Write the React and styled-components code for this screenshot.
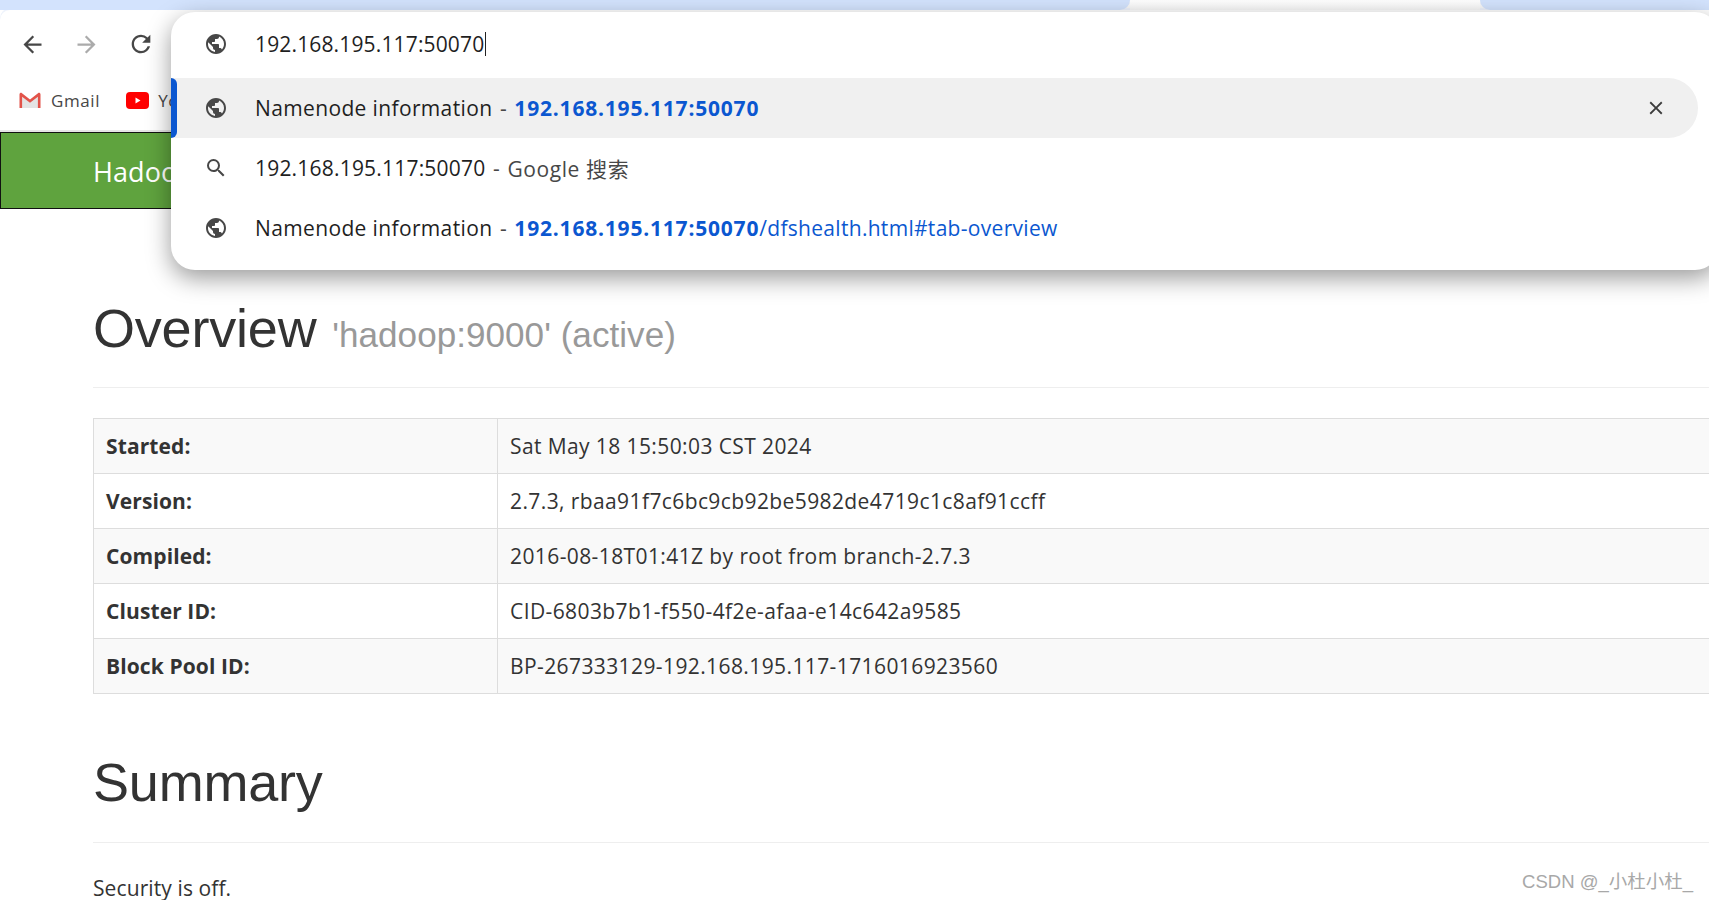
import React from 'react';
import styled, { createGlobalStyle } from 'styled-components';
import { MdArrowBack, MdArrowForward, MdRefresh, MdPublic, MdSearch, MdClose } from 'react-icons/md';

const UI_FONT = `"Open Sans", "Noto Sans CJK SC", sans-serif`;
const HEAD_FONT = `"Liberation Sans", Arial, sans-serif`;

const GlobalStyle = createGlobalStyle`
  html, body {
    margin: 0;
    padding: 0;
    width: 1709px;
    height: 900px;
    overflow: hidden;
    background: #fff;
  }
`;

function GmailIcon() {
  return (
    <svg width="24" height="18" viewBox="0 0 24 18">
      <path d="M3 3l9 7 9-7v14H3z" fill="#e4e4e4" />
      <path d="M1.5 17V3.4C1.5 2 3 1.4 4 2.2L12 8.4l8-6.2c1-.8 2.5-.2 2.5 1.2V17h-2.6V5.8L12 11.8 4.1 5.8V17z" fill="#e2534a" />
    </svg>
  );
}

function YoutubeIcon() {
  return (
    <svg width="23" height="17" viewBox="0 0 23 17">
      <rect width="23" height="17" rx="4" fill="#f00" />
      <path d="M9.5 5.5l5 3-5 3z" fill="#fff" />
    </svg>
  );
}

function App() {
  return (
    <>
      <GlobalStyle />
      <Page>
        <TabStrip>
          <TabGap $width="1130px" />
          <ActiveTab />
          <TabGap $flex />
        </TabStrip>

        <Toolbar>
          <NavRow>
            <NavButton><MdArrowBack size={27} color="#474747" /></NavButton>
            <NavButton><MdArrowForward size={27} color="#ababab" /></NavButton>
            <NavButton><MdRefresh size={28} color="#474747" /></NavButton>
          </NavRow>
          <BookmarkRow>
            <Bookmark><GmailIcon />Gmail</Bookmark>
            <Bookmark><YoutubeIcon />YouTube</Bookmark>
          </BookmarkRow>
        </Toolbar>

        <Navbar>Hadoop</Navbar>

        <Content>
          <PageHeader>
            <Heading>Overview <Small>'hadoop:9000' (active)</Small></Heading>
          </PageHeader>

          <InfoTable>
            <tbody>
              {INFO_ROWS.map(([label, value], i) => (
                <InfoRow key={label} $striped={i % 2 === 0}>
                  <LabelCell>{label}</LabelCell>
                  <ValueCell>{value}</ValueCell>
                </InfoRow>
              ))}
            </tbody>
          </InfoTable>

          <PageHeader $second>
            <Heading>Summary</Heading>
          </PageHeader>

          <Paragraph>Security is off.</Paragraph>
        </Content>

        <Omnibox>
          <InputRow>
            <IconSlot><MdPublic size={24} color="#474747" /></IconSlot>
            <InputText>192.168.195.117:50070</InputText>
            <Caret />
          </InputRow>
          <Suggestion $selected>
            <SelectedMark />
            <IconSlot><MdPublic size={24} color="#474747" /></IconSlot>
            <Title $wide>Namenode information</Title>
            <Dash>-</Dash>
            <Url><b>192.168.195.117:50070</b></Url>
            <CloseButton><MdClose size={22} color="#3c3c3c" /></CloseButton>
          </Suggestion>
          <Suggestion>
            <IconSlot><MdSearch size={24} color="#474747" /></IconSlot>
            <Title>192.168.195.117:50070</Title>
            <Dash>-</Dash>
            <Engine>Google 搜索</Engine>
          </Suggestion>
          <Suggestion>
            <IconSlot><MdPublic size={24} color="#474747" /></IconSlot>
            <Title $wide>Namenode information</Title>
            <Dash>-</Dash>
            <Url><b>192.168.195.117:50070</b>/dfshealth.html#tab-overview</Url>
          </Suggestion>
        </Omnibox>

        <Watermark>CSDN @_小杜小杜_</Watermark>
      </Page>
    </>
  );
}

export default App;

const INFO_ROWS = [
  ['Started:', 'Sat May 18 15:50:03 CST 2024'],
  ['Version:', '2.7.3, rbaa91f7c6bc9cb92be5982de4719c1c8af91ccff'],
  ['Compiled:', '2016-08-18T01:41Z by root from branch-2.7.3'],
  ['Cluster ID:', 'CID-6803b7b1-f550-4f2e-afaa-e14c642a9585'],
  ['Block Pool ID:', 'BP-267333129-192.168.195.117-1716016923560'],
];

const Page = styled.div`
  position: relative;
  width: 1709px;
  height: 900px;
  overflow: hidden;
  font-family: ${UI_FONT};
  background: #fff;
`;

const TabStrip = styled.div`
  display: flex;
  height: 10px;
  background: #f8f8f8;
`;

const TabGap = styled.div`
  background: #d3e3fd;
  width: ${p => p.$width || 'auto'};
  flex: ${p => (p.$flex ? 1 : 'none')};
  border-radius: ${p => (p.$flex ? '0 0 0 12px' : '0 0 12px 0')};
`;

const ActiveTab = styled.div`
  width: 350px;
  background: linear-gradient(#fff, #f8f8f8);
`;

const Toolbar = styled.div`
  background: #fff;
  height: 120px;
  border-radius: 10px 0 0 0;
  box-shadow: 0 -2px 0 #eef3fc;
  border-bottom: 2px solid #e6e6e6;
`;

const NavRow = styled.div`
  display: flex;
  align-items: center;
  height: 68px;
  padding-left: 5.5px;
`;

const NavButton = styled.div`
  width: 54px;
  display: flex;
  justify-content: center;
`;

const BookmarkRow = styled.div`
  display: flex;
  align-items: center;
  height: 44px;
  padding-left: 18px;
  gap: 26px;
`;

const Bookmark = styled.div`
  display: flex;
  align-items: center;
  gap: 9px;
  font-size: 17px;
  color: #474747;
  letter-spacing: 0.6px;
`;

const Navbar = styled.div`
  box-sizing: border-box;
  height: 77px;
  display: flex;
  align-items: center;
  padding: 1px 0 0 92px;
  background: #5fa33e;
  border: 1px solid #111;
  color: #fff;
  font-size: 27px;
  letter-spacing: 0.1px;
`;

const Content = styled.div`
  padding: 90px 0 0 93px;
`;

const PageHeader = styled.div`
  padding-bottom: 29px;
  margin-top: ${p => (p.$second ? '59px' : '0')};
  border-bottom: 1px solid #eee;
  margin-bottom: 30px;
  width: 1700px;
`;

const Heading = styled.h1`
  margin: 0;
  font: 500 54px/1.1 ${HEAD_FONT};
  letter-spacing: -0.2px;
  color: #333;
`;

const Small = styled.small`
  margin-left: 1px;
  font-size: 35.1px;
  font-weight: 400;
  letter-spacing: 0.03px;
  color: #999;
`;

const InfoTable = styled.table`
  border-collapse: collapse;
  width: 1800px;
  table-layout: fixed;
  font-size: 21px;
  color: #333;
  border: 1px solid #ddd;
`;

const InfoRow = styled.tr`
  height: 55px;
  background: ${p => (p.$striped ? '#f9f9f9' : '#fff')};
`;

const LabelCell = styled.td`
  width: 379px;
  padding: 0 12px;
  border: 1px solid #ddd;
  font-weight: 700;
  letter-spacing: 0.1px;
`;

const ValueCell = styled.td`
  padding: 0 12px;
  border: 1px solid #ddd;
  letter-spacing: 0.4px;
`;

const Paragraph = styled.p`
  margin: 0;
  padding-top: 3px;
  font-size: 21px;
  line-height: 24px;
  color: #333;
  letter-spacing: 0.1px;
`;

/* chrome's address dropdown sits over the page */
const Omnibox = styled.div`
  position: absolute;
  left: 171px;
  top: 12px;
  width: 1548px;
  box-sizing: border-box;
  padding-bottom: 12px;
  background: #fff;
  border-radius: 24px;
  box-shadow: 0 8px 24px rgba(0, 0, 0, 0.4);
`;

const InputRow = styled.div`
  display: flex;
  align-items: center;
  height: 64px;
  padding-bottom: 2px;
`;

const IconSlot = styled.div`
  width: 84px;
  box-sizing: border-box;
  flex: none;
  display: flex;
  padding-left: 33px;
`;

const InputText = styled.span`
  font-size: 21px;
  color: #1f1f1f;
  letter-spacing: 0.15px;
`;

const Caret = styled.span`
  width: 1px;
  height: 24px;
  margin-left: 1px;
  background: #222;
`;

const Suggestion = styled.div`
  position: relative;
  display: flex;
  align-items: center;
  height: 60px;
  width: 1527px;
  font-size: 21px;
  letter-spacing: 0.2px;
  color: #1f1f1f;
  border-radius: 0 30px 30px 0;
  background: ${p => (p.$selected ? '#f0f0f0' : 'transparent')};
`;

const SelectedMark = styled.span`
  position: absolute;
  left: 0;
  top: 0;
  bottom: 0;
  width: 6px;
  background: #0b57d0;
  border-radius: 0 6px 6px 0;
`;

const Title = styled.span`
  white-space: pre;
  letter-spacing: ${p => (p.$wide ? '0.36px' : '0.2px')};
`;

const Dash = styled.span`
  margin: 0 7.5px;
  color: #474747;
`;

const Url = styled.span`
  color: #0b57d0;
  letter-spacing: 0.3px;
  b { font-weight: 700; letter-spacing: 0.8px; }
`;

const Engine = styled.span`
  color: #474747;
  letter-spacing: 0.6px;
`;

const CloseButton = styled.span`
  position: absolute;
  right: 31px;
  top: 19px;
  display: flex;
`;

const Watermark = styled.div`
  position: absolute;
  right: 16px;
  top: 870px;
  font: 18.5px/24px ${HEAD_FONT}, "Noto Sans CJK SC", sans-serif;
  color: #a8a8a8;
`;
